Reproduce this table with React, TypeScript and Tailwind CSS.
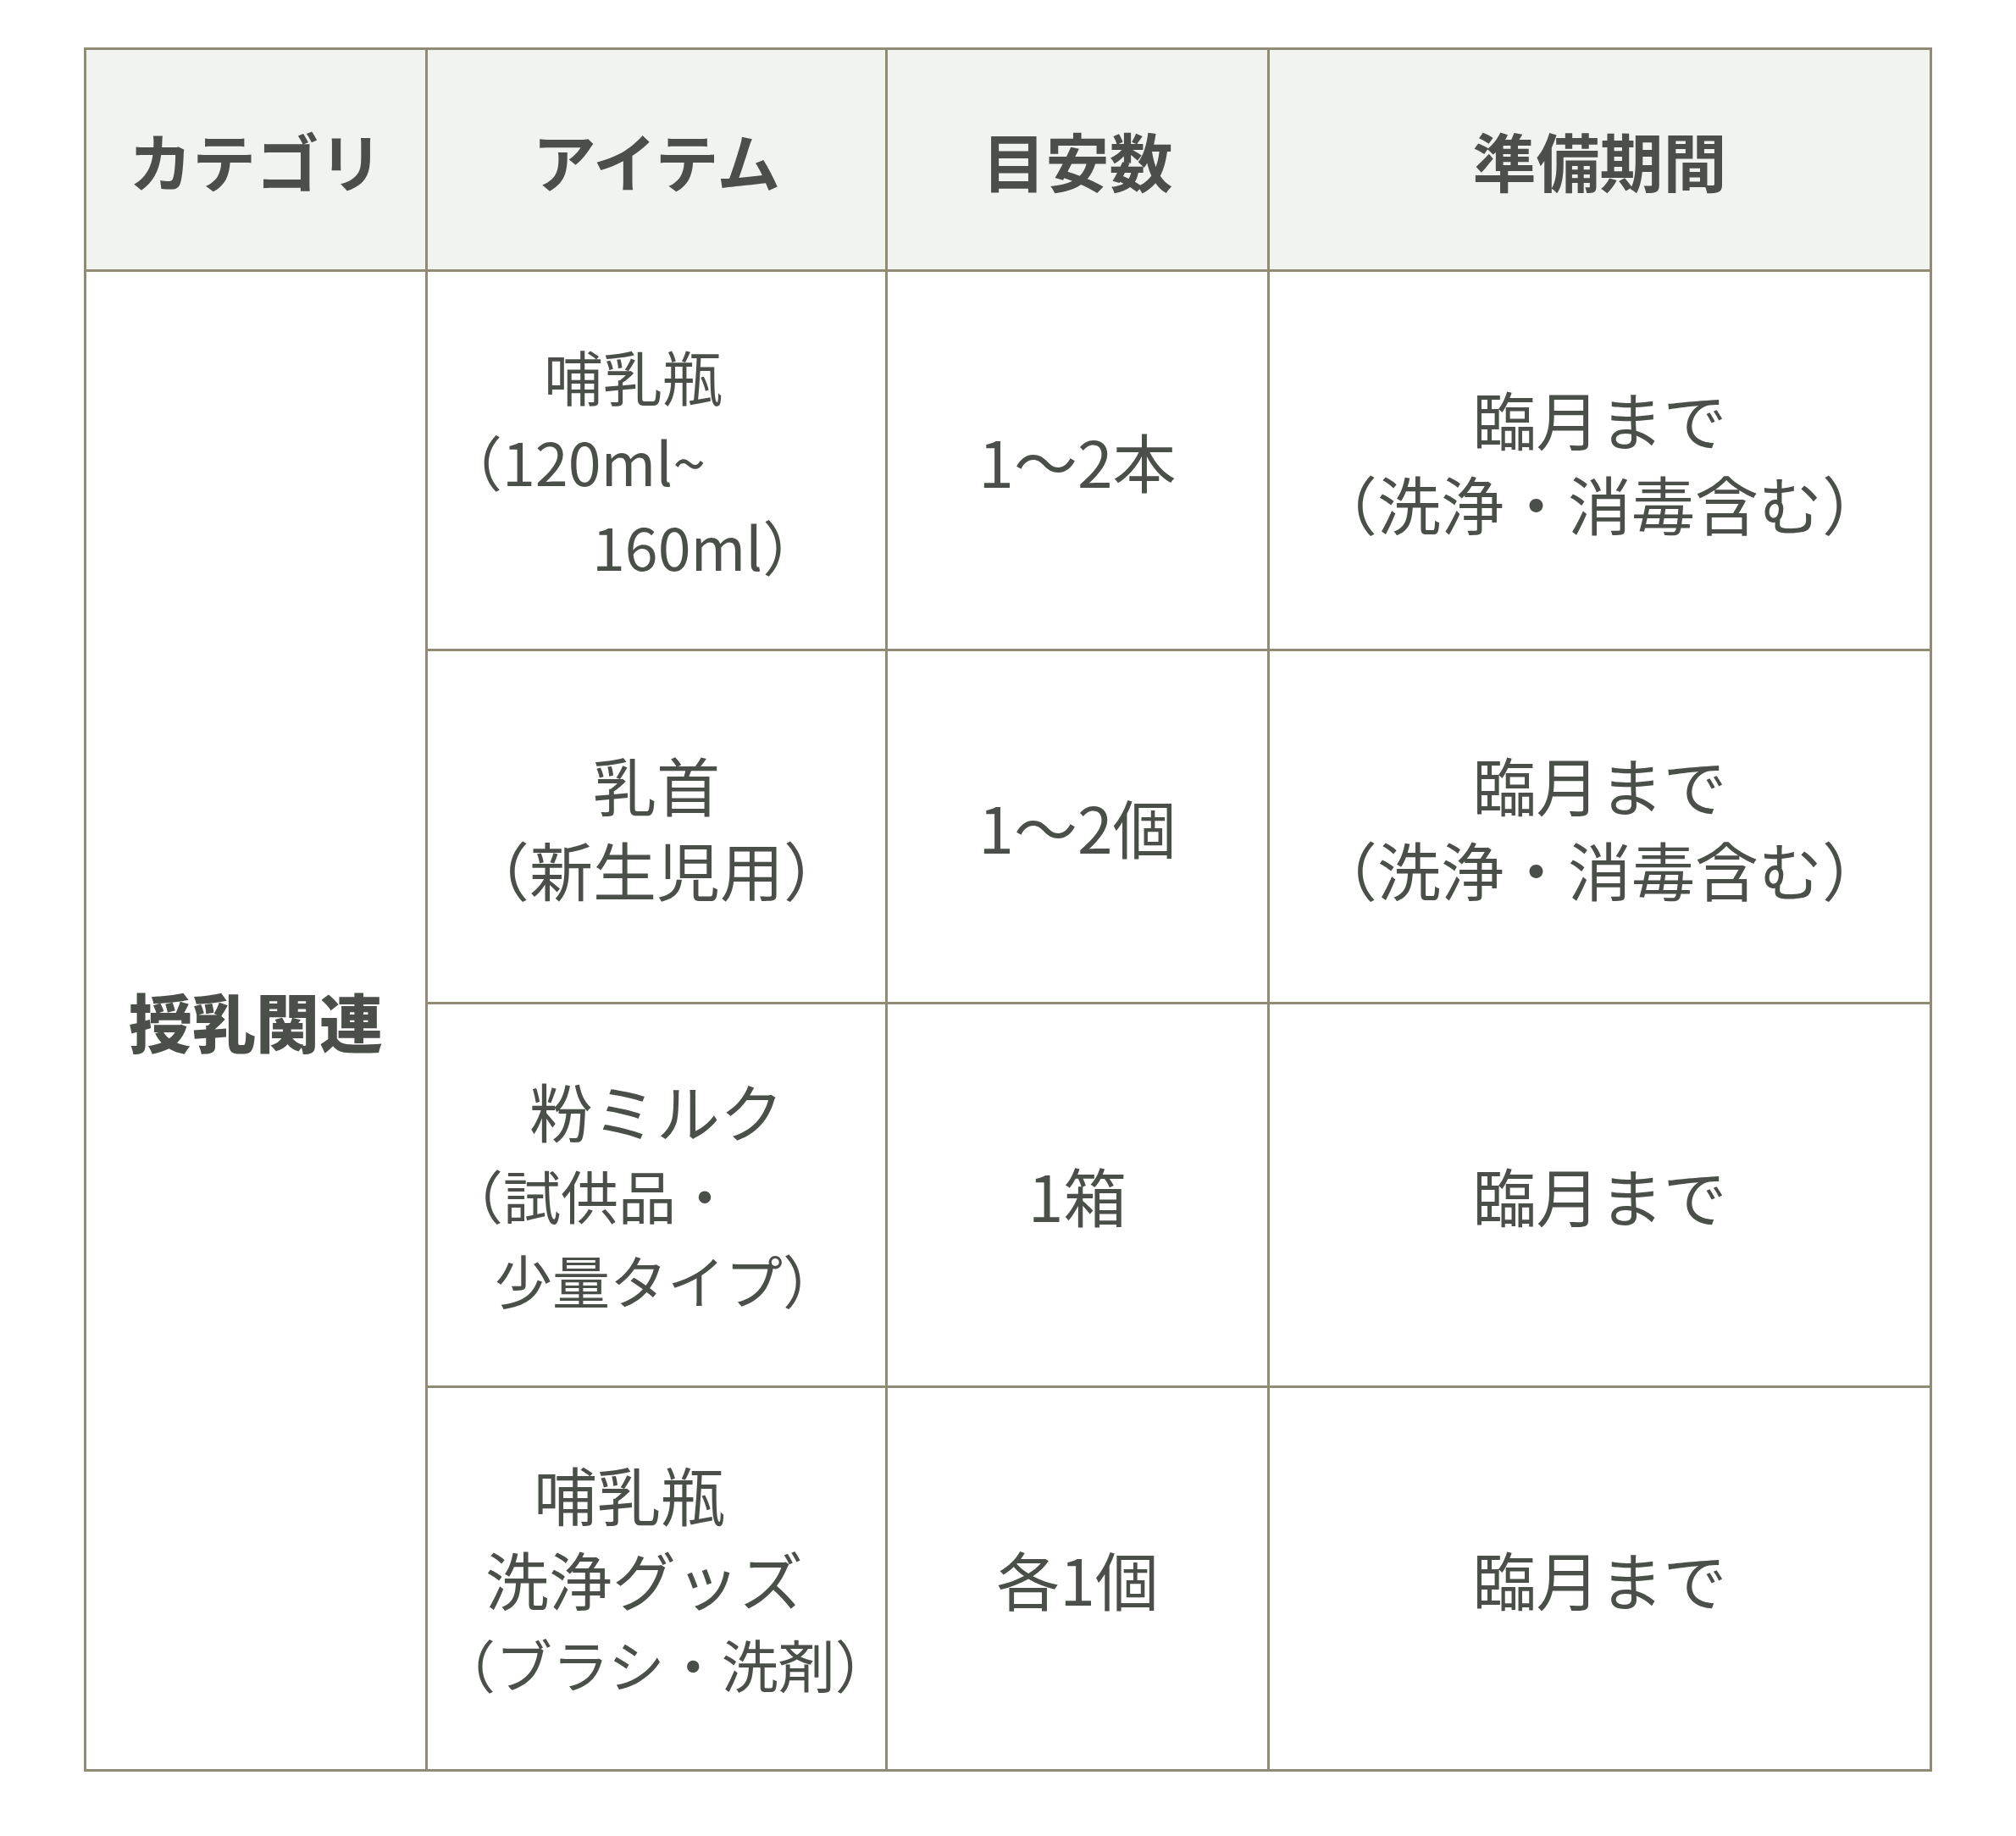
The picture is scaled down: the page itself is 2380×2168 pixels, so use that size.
import React from 'react';

type Line = { text: string; pad?: string; size?: string };

const rows: { item: Line[]; amount: string; period: string[]; h: string }[] = [
    {
        item: [
            { text: '哺乳瓶', pad: 'pl-[137px]', size: 'text-[70px]' },
            { text: '（120ml~', pad: 'pl-[18px]', size: 'text-[70px]' },
            { text: '160ml）', pad: 'pl-[194px]', size: 'text-[70px]' },
        ],
        amount: '1〜2本',
        period: ['臨月まで', '（洗浄・消毒含む）'],
        h: 'h-[448px]',
    },
    {
        item: [{ text: '乳首' }, { text: '（新生児用）' }],
        amount: '1〜2個',
        period: ['臨月まで', '（洗浄・消毒含む）'],
        h: 'h-[417px]',
    },
    {
        item: [
            { text: '粉ミルク' },
            { text: '（試供品・', pad: 'pl-[21px]', size: 'text-[68px]' },
            { text: '少量タイプ）', pad: 'pl-[79px]', size: 'text-[68px]' },
        ],
        amount: '1箱',
        period: ['臨月まで'],
        h: 'h-[453px]',
    },
    {
        item: [
            { text: '哺乳瓶', pad: 'pl-[125px]' },
            { text: '洗浄グッズ', pad: 'pl-[68px]' },
            { text: '（ブラシ・洗剤）', pad: 'pl-[13px]', size: 'text-[67px]' },
        ],
        amount: '各1個',
        period: ['臨月まで'],
        h: 'h-[453px]',
    },
];

const cell = 'border-r-[3px] border-b-[3px] border-[#8f8b74] p-0 align-middle';

export default function App() {
    return (
        <div className="min-h-[2168px] bg-white pl-[99px] pt-[56px] font-['Noto_Sans_CJK_JP','Noto_Sans',sans-serif] text-[#4b4f4a]">
            <table className="w-[2182px] table-fixed border-separate border-spacing-0 border-l-[3px] border-t-[3px] border-[#8f8b74]">
                <colgroup>
                    <col className="w-[403px]" />
                    <col className="w-[543px]" />
                    <col className="w-[451px]" />
                    <col className="w-[782px]" />
                </colgroup>
                <thead>
                    <tr className="h-[262px] bg-[#f1f3ef] text-[75px] font-black leading-[100px]">
                        <th className={cell}>カテゴリ</th>
                        <th className={cell}>アイテム</th>
                        <th className={cell}>目安数</th>
                        <th className={cell}>準備期間</th>
                    </tr>
                </thead>
                <tbody className="text-[75px] leading-[100px]">
                    {rows.map((r, i) => (
                        <tr key={i} className={r.h}>
                            {i === 0 && (
                                <td rowSpan={4} className={`${cell} text-center font-black`}>
                                    授乳関連
                                </td>
                            )}
                            <td className={cell}>
                                {r.item.map((l, j) => (
                                    <div
                                        key={j}
                                        className={`whitespace-nowrap ${l.size ?? ''} ${l.pad ? `text-left ${l.pad}` : 'text-center'}`}
                                    >
                                        {l.text}
                                    </div>
                                ))}
                            </td>
                            <td className={`${cell} text-center`}>{r.amount}</td>
                            <td className={`${cell} text-center`}>
                                {r.period.map((p, j) => (
                                    <div key={j} className="whitespace-nowrap">{p}</div>
                                ))}
                            </td>
                        </tr>
                    ))}
                </tbody>
            </table>
        </div>
    );
}
